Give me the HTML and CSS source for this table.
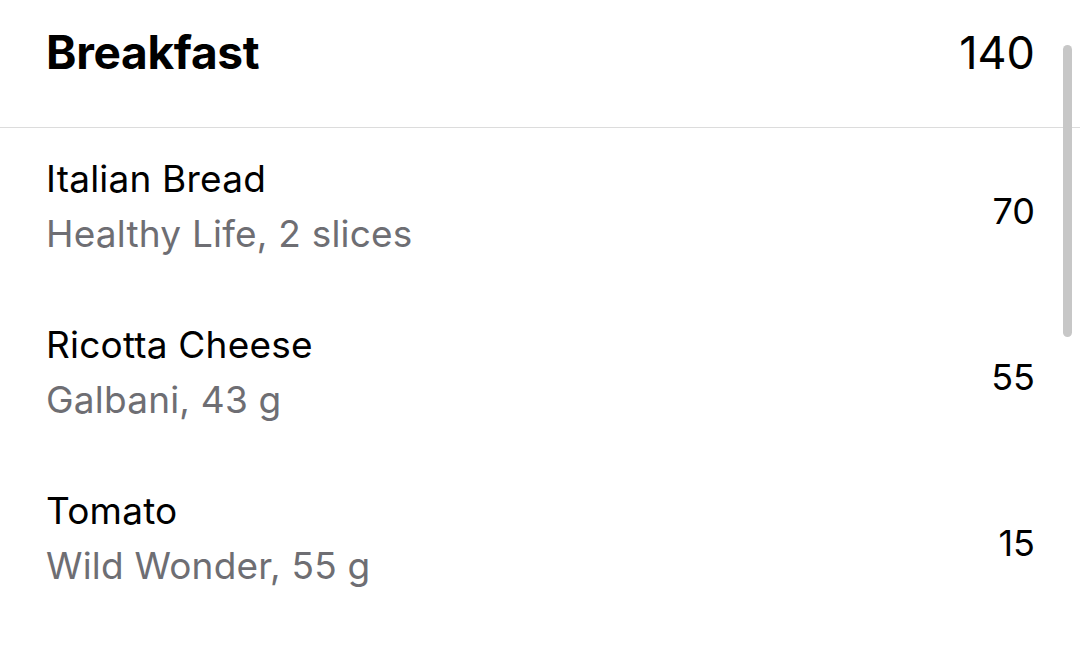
FILE: index.html
```html
<!DOCTYPE html>
<html lang="en">
<head>
    <meta charset="UTF-8">
    <meta name="viewport" content="width=device-width, initial-scale=1.0">
    <title>Breakfast</title>
    <link rel="stylesheet" href="styles.css">
</head>
<body>
    <div id="container">
        <header class="mealHeader">
            <h1>Breakfast</h1>
            <span class="mealTotal">140</span>
        </header>

        <ul class="foodList">
            <li class="foodRow">
                <div class="foodInfo">
                    <p class="foodName">Italian Bread</p>
                    <p class="foodDetail">Healthy Life, 2 slices</p>
                </div>
                <span class="foodCalories">70</span>
            </li>
            <li class="foodRow">
                <div class="foodInfo">
                    <p class="foodName">Ricotta Cheese</p>
                    <p class="foodDetail">Galbani, 43 g</p>
                </div>
                <span class="foodCalories">55</span>
            </li>
            <li class="foodRow">
                <div class="foodInfo">
                    <p class="foodName">Tomato</p>
                    <p class="foodDetail">Wild Wonder, 55 g</p>
                </div>
                <span class="foodCalories">15</span>
            </li>
        </ul>

        <div class="scrollThumb"></div>
    </div>
</body>
</html>
```

FILE: styles.css
```css
* {
    box-sizing: border-box;
}
body {
    margin: 0;
    background-color: #ffffff;
    font-family: Inter, "Noto Sans", sans-serif;
    color: #000000;
}
#container {
    position: relative;
    width: 1080px;
    height: 649px;
    overflow: hidden;
}

.mealHeader {
    display: flex;
    justify-content: space-between;
    align-items: baseline;
    height: 128px;
    padding: 24px 45px 0 46px;
    border-bottom: 1px solid #dcdcdc;
}

.mealHeader h1 {
    margin: 0;
    font-size: 46px;
    font-weight: 700;
    letter-spacing: -0.3px;
}

.mealTotal {
    font-size: 45px;
    font-weight: 400;
}

.foodList {
    list-style: none;
    margin: 0;
    padding: 0;
}

.foodRow {
    display: flex;
    justify-content: space-between;
    align-items: center;
    height: 166px;
    padding: 0 45px 0 46px;
}

.foodInfo {
    margin-bottom: 11px;
}

.foodInfo p {
    margin: 0;
    line-height: 55px;
    letter-spacing: 0.2px;
}

.foodName {
    font-size: 37px;
}

.foodDetail {
    font-size: 37px;
    color: #6e6e73;
}

.foodCalories {
    font-size: 36px;
}

.scrollThumb {
    position: absolute;
    top: 45px;
    right: 8px;
    width: 9px;
    height: 292px;
    border-radius: 5px;
    background-color: #c7c7c7;
}
```
